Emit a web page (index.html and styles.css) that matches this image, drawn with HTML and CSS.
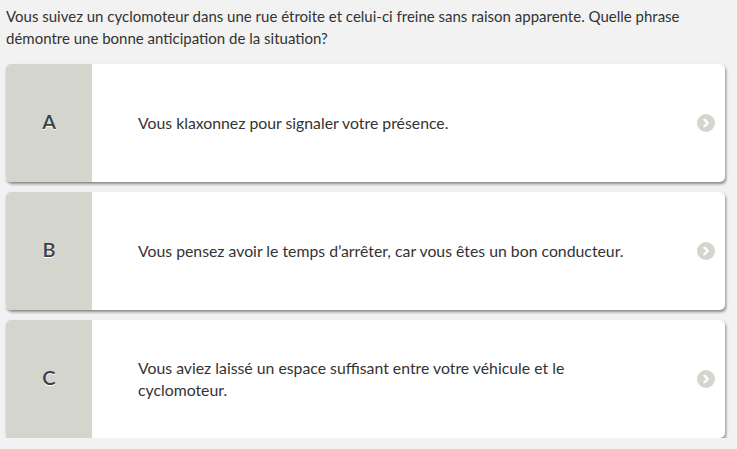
FILE: index.html
```html
<!DOCTYPE html>
<html lang="fr">
<head>
<meta charset="utf-8">
<link rel="stylesheet" href="styles.css">
</head>
<body>
<div class="page">
  <p class="question">Vous suivez un cyclomoteur dans une rue étroite et celui-ci freine sans raison apparente. Quelle phrase démontre une bonne anticipation de la situation?</p>
  <div class="answers">
    <div class="card">
      <div class="letter">A</div>
      <div class="text">Vous klaxonnez pour signaler votre présence.</div>
      <div class="arrow"><svg width="18" height="18" viewBox="0 0 18 18"><circle cx="9" cy="9" r="9" fill="#d4d6cd"/><path d="M7.4 5.6 L10.8 9 L7.4 12.4" fill="none" stroke="#fff" stroke-width="2.3" stroke-linecap="round" stroke-linejoin="round"/></svg></div>
    </div>
    <div class="card">
      <div class="letter">B</div>
      <div class="text">Vous pensez avoir le temps d’arrêter, car vous êtes un bon conducteur.</div>
      <div class="arrow"><svg width="18" height="18" viewBox="0 0 18 18"><circle cx="9" cy="9" r="9" fill="#d4d6cd"/><path d="M7.4 5.6 L10.8 9 L7.4 12.4" fill="none" stroke="#fff" stroke-width="2.3" stroke-linecap="round" stroke-linejoin="round"/></svg></div>
    </div>
    <div class="card">
      <div class="letter">C</div>
      <div class="text">Vous aviez laissé un espace suffisant entre votre véhicule et le cyclomoteur.</div>
      <div class="arrow"><svg width="18" height="18" viewBox="0 0 18 18"><circle cx="9" cy="9" r="9" fill="#d4d6cd"/><path d="M7.4 5.6 L10.8 9 L7.4 12.4" fill="none" stroke="#fff" stroke-width="2.3" stroke-linecap="round" stroke-linejoin="round"/></svg></div>
    </div>
  </div>
</div>
</body>
</html>
```

FILE: styles.css
```css
html, body {
  margin: 0;
  padding: 0;
  background: #f2f2f2;
}
body {
  font-family: Lato, "Open Sans", sans-serif;
  color: #333333;
}
.page {
  padding: 0 12px 0 6px;
}
.question {
  margin: 0;
  padding-top: 5px;
  font-size: 15px;
  line-height: 22px;
}
.answers {
  margin-top: 15px;
  display: flex;
  flex-direction: column;
  gap: 10px;
}
.card {
  display: flex;
  align-items: center;
  height: 118px;
  background: #ffffff;
  border-radius: 5px;
  overflow: hidden;
  box-shadow: 1px 2px 3px rgba(0, 0, 0, 0.45);
}
.letter {
  align-self: stretch;
  width: 86px;
  flex: none;
  background: #d4d6cd;
  display: flex;
  align-items: center;
  justify-content: center;
  padding-bottom: 5px;
  box-sizing: border-box;
  font-size: 20px;
  font-weight: 600;
  color: #3a3e48;
  text-shadow: 0 1px 0 #ffffff;
}
.text {
  flex: 1;
  padding-left: 46px;
  max-width: 500px;
  font-size: 15.8px;
  line-height: 22px;
  padding-bottom: 1px;
}
.arrow {
  margin-left: auto;
  margin-right: 10px;
  width: 18px;
  height: 18px;
  display: flex;
}
```
